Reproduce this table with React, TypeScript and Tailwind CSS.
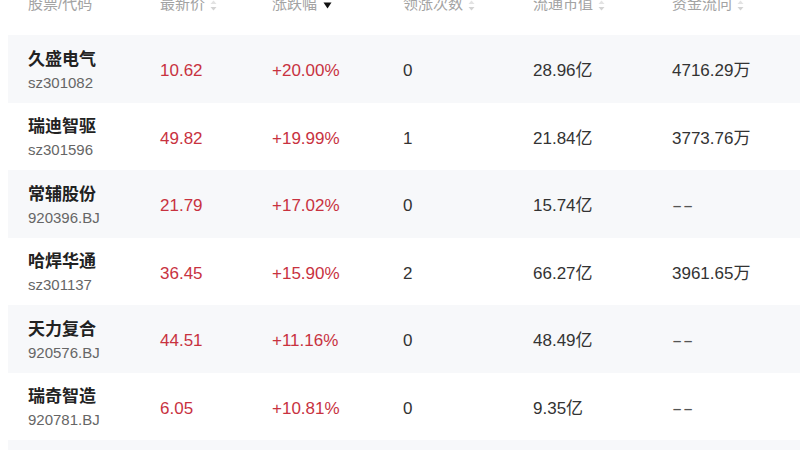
const rows = [
  { name: "久盛电气", code: "sz301082", price: "10.62", change: "+20.00%", count: "0", cap: "28.96亿", flow: "4716.29万" },
  { name: "瑞迪智驱", code: "sz301596", price: "49.82", change: "+19.99%", count: "1", cap: "21.84亿", flow: "3773.76万" },
  { name: "常辅股份", code: "920396.BJ", price: "21.79", change: "+17.02%", count: "0", cap: "15.74亿", flow: "--" },
  { name: "哈焊华通", code: "sz301137", price: "36.45", change: "+15.90%", count: "2", cap: "66.27亿", flow: "3961.65万" },
  { name: "天力复合", code: "920576.BJ", price: "44.51", change: "+11.16%", count: "0", cap: "48.49亿", flow: "--" },
  { name: "瑞奇智造", code: "920781.BJ", price: "6.05", change: "+10.81%", count: "0", cap: "9.35亿", flow: "--" },
];

const cols = "grid grid-cols-[132px_112px_131px_130px_139px_1fr]";

function SortIcon() {
  return (
    <svg width="7" height="11" viewBox="0 0 7 11" className="ml-[5px] mt-[2px]">
      <path d="M3.5 0.5 L6.5 4 L0.5 4 Z" fill="#e3e3e3" />
      <path d="M3.5 10.5 L6.5 7 L0.5 7 Z" fill="#d3d3d3" />
    </svg>
  );
}

function DownIcon() {
  return (
    <svg width="9" height="7" viewBox="0 0 9 7" className="ml-[6px] mt-[3px]">
      <path d="M0.5 0.5 L8.5 0.5 L4.5 6.5 Z" fill="#111" />
    </svg>
  );
}

export default function App() {
  return (
    <div
      className="h-[450px] w-[800px] overflow-hidden bg-white"
      style={{ fontFamily: '"Liberation Sans", "Noto Sans CJK SC", sans-serif' }}
    >
      <div className="ml-[8px]">
        <div className={`${cols} h-[35px] items-start pl-[20px] text-[15px] leading-[20px] text-[#a3a3a3]`}>
          <div className="-mt-[6px] flex items-center">股票/代码</div>
          <div className="-mt-[6px] flex items-center">最新价<SortIcon /></div>
          <div className="-mt-[6px] flex items-center">涨跌幅<DownIcon /></div>
          <div className="-mt-[6px] flex items-center">领涨次数<SortIcon /></div>
          <div className="-mt-[6px] flex items-center">流通市值<SortIcon /></div>
          <div className="-mt-[6px] flex items-center">资金流向<SortIcon /></div>
        </div>
        {rows.map((r, i) => (
          <div
            key={r.code}
            className={`${cols} h-[67.5px] items-center pl-[20px] pt-[4px] ${i % 2 === 0 ? "bg-[#f7f8fa]" : "bg-white"}`}
          >
            <div className="flex flex-col">
              <span className="text-[17px] font-bold leading-[22px] text-[#222]">{r.name}</span>
              <span className="mt-[2px] text-[15px] leading-[20px] text-[#666]">{r.code}</span>
            </div>
            <div className="text-[17px] text-[#c8323f]">{r.price}</div>
            <div className="text-[17px] text-[#c8323f]">{r.change}</div>
            <div className="text-[17px] text-[#333]">{r.count}</div>
            <div className="text-[17px] text-[#333]">{r.cap}</div>
            <div className="text-[17px] text-[#333]">
              {r.flow === "--" ? (
                <span className="inline-block origin-left scale-x-[1.8] tracking-[0.5px] text-[#555]">--</span>
              ) : (
                r.flow
              )}
            </div>
          </div>
        ))}
        <div className="h-[67.5px] bg-[#f7f8fa]" />
      </div>
    </div>
  );
}
